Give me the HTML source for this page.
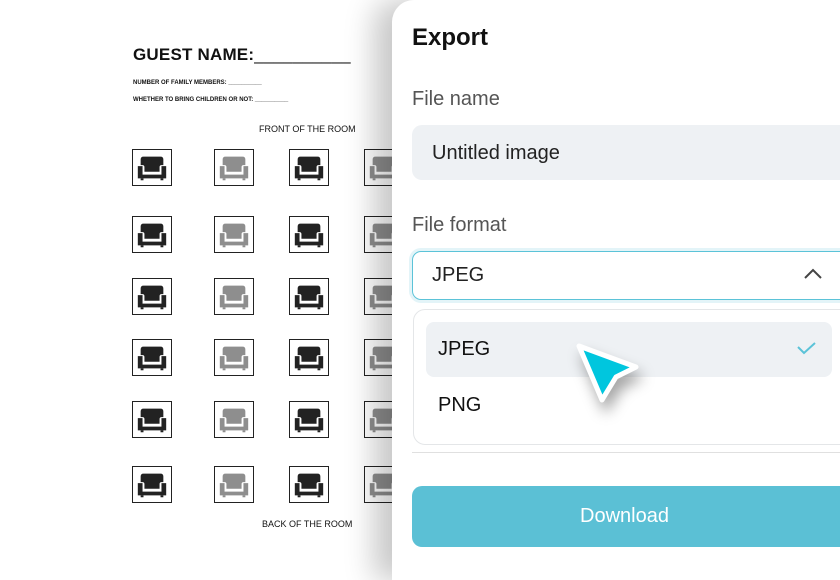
<!DOCTYPE html>
<html><head><style>
body{margin:0;width:840px;height:560px;overflow:hidden;background:#fff;font-family:"Liberation Sans",sans-serif;position:relative}
.a{position:absolute}
.doc{color:#111}
.panel{position:absolute;left:392px;top:0;width:460px;height:580px;background:#fff;border-top-left-radius:22px;box-shadow:-18px 0 30px rgba(0,0,0,.22)}
.p{position:absolute;font-family:"Liberation Sans",sans-serif}
.cell{position:absolute;width:40px;height:37px;border:1.3px solid #222;box-sizing:border-box;background:#fff}
</style></head><body>
<svg width="0" height="0" style="position:absolute"><defs>
<symbol id="ch" viewBox="0 0 40 37"><path d="M11 7h18q3 0 3 3v6h-2q-2 0-2 2v5H12v-5q0-2-2-2H8v-6q0-3 3-3z"/><path d="M5 17h5v9h20v-9h5v13H5z"/><rect x="8" y="30" width="3" height="2"/><rect x="29" y="30" width="3" height="2"/></symbol>
</defs></svg>
<div class="doc">
<div class="a" style="left:133px;top:45px;font-size:17px;font-weight:bold;letter-spacing:.2px">GUEST NAME:<span style="font-weight:normal">__________</span></div>
<div class="a" style="left:133px;top:80px;font-size:6px;font-weight:bold">NUMBER OF FAMILY MEMBERS: __________</div>
<div class="a" style="left:133px;top:97px;font-size:6px;font-weight:bold">WHETHER TO BRING CHILDREN OR NOT: __________</div>
<div class="a" style="left:259px;top:124px;font-size:9px">FRONT OF THE ROOM</div>
<div class="a" style="left:262px;top:519px;font-size:9px">BACK OF THE ROOM</div>
</div>
<div id="grid"></div>
<script>
var xs=[132,214,289,364],ys=[149,216,278,339,401,466],h='';
ys.forEach(function(y){xs.forEach(function(x,i){var c=i%2?'#8e8e8e':'#222';h+='<div class="cell" style="left:'+x+'px;top:'+y+'px"><svg width="38" height="35" viewBox="0 0 40 37" fill="'+c+'"><use href="#ch"/></svg></div>';});});
document.getElementById('grid').innerHTML=h;
</script>
<div class="panel">
<div class="p" style="left:20px;top:24px;font-size:24px;font-weight:bold;color:#111">Export</div>
<div class="p" style="left:20px;top:88px;font-size:20px;color:#555">File name</div>
<div class="p" style="left:20px;top:125px;width:450px;height:55px;background:#eef1f4;border-radius:10px"></div>
<div class="p" style="left:40px;top:142px;font-size:20px;color:#222">Untitled image</div>
<div class="p" style="left:20px;top:214px;font-size:20px;color:#555">File format</div>
<div class="p" style="left:20px;top:251px;width:450px;height:49px;border:1.5px solid #5bc3d8;border-radius:9px;box-sizing:border-box;box-shadow:0 0 0 3px #e3f4f8"></div>
<div class="p" style="left:40px;top:264px;font-size:20px;color:#222">JPEG</div>
<svg class="p" style="left:411px;top:267px" width="20" height="14"><path d="M2 11l8-8 8 8" stroke="#444" stroke-width="2" fill="none"/></svg>
<div class="p" style="left:21px;top:309px;width:450px;height:136px;border:1px solid #e4e6e8;border-radius:12px;box-sizing:border-box"></div>
<div class="p" style="left:34px;top:322px;width:406px;height:55px;background:#eef1f4;border-radius:8px"></div>
<div class="p" style="left:46px;top:338px;font-size:20px;color:#111">JPEG</div>
<svg class="p" style="left:403px;top:340px" width="24" height="18"><path d="M3 7l6 6 11-10" stroke="#5bc3d8" stroke-width="2" fill="none"/></svg>
<div class="p" style="left:46px;top:394px;font-size:20px;color:#111">PNG</div>
<div class="p" style="left:20px;top:452px;width:450px;height:1px;background:#e0e0e0"></div>
<div class="p" style="left:20px;top:486px;width:450px;height:61px;background:#5bc0d5;border-radius:10px"></div>
<div class="p" style="left:188px;top:505px;font-size:20px;color:#fff">Download</div>
<svg class="p" style="left:174px;top:334px;filter:drop-shadow(4px 10px 7px rgba(0,0,0,.35))" width="90" height="80"><path d="M13 12L70 33L50 43L36 66Z" fill="#00c6de" stroke="#fff" stroke-width="5" stroke-linejoin="round"/></svg>
</div>
</body></html>
